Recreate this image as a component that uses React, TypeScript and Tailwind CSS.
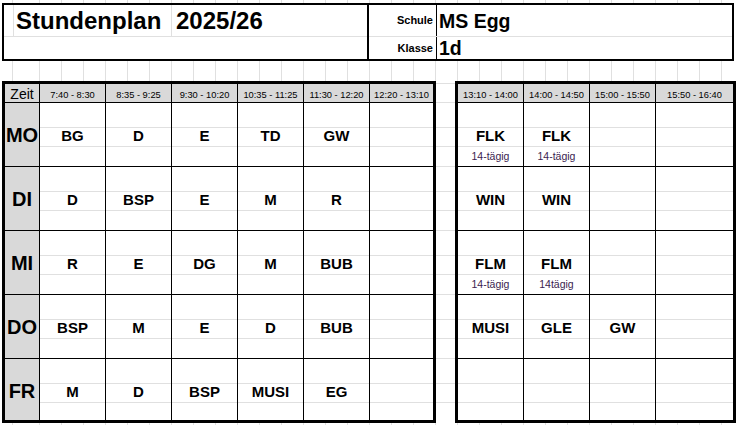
import clsx from "clsx";

type Slot = { s?: string; n?: string };

const AM_TIMES = ["7:40 - 8:30", "8:35 - 9:25", "9:30 - 10:20", "10:35 - 11:25", "11:30 - 12:20", "12:20 - 13:10"];
const PM_TIMES = ["13:10 - 14:00", "14:00 - 14:50", "15:00 - 15:50", "15:50 - 16:40"];

const WEEK: { day: string; am: string[]; pm: Slot[] }[] = [
  {
    day: "MO",
    am: ["BG", "D", "E", "TD", "GW", ""],
    pm: [{ s: "FLK", n: "14-tägig" }, { s: "FLK", n: "14-tägig" }, {}, {}],
  },
  {
    day: "DI",
    am: ["D", "BSP", "E", "M", "R", ""],
    pm: [{ s: "WIN" }, { s: "WIN" }, {}, {}],
  },
  {
    day: "MI",
    am: ["R", "E", "DG", "M", "BUB", ""],
    pm: [{ s: "FLM", n: "14-tägig" }, { s: "FLM", n: "14tägig" }, {}, {}],
  },
  {
    day: "DO",
    am: ["BSP", "M", "E", "D", "BUB", ""],
    pm: [{ s: "MUSI" }, { s: "GLE" }, { s: "GW" }, {}],
  },
  {
    day: "FR",
    am: ["M", "D", "BSP", "MUSI", "EG", ""],
    pm: [{}, {}, {}, {}],
  },
];

function HeadCell({ label, first }: { label: string; first: boolean }) {
  return (
    <div
      className={clsx(
        "flex h-[19px] items-end justify-center border-b border-black bg-[#d9d9d9] pb-[1px] text-[9.3px] leading-[11px]",
        !first && "border-l",
      )}
    >
      {label}
    </div>
  );
}

function SlotCell({ slot, first, last }: { slot: Slot; first: boolean; last: boolean }) {
  return (
    <div className={clsx("flex flex-col border-black bg-white", !first && "border-l", !last && "border-b")}>
      <div className="h-[24px]" />
      <div className="flex h-[19px] items-center justify-center border-t border-[#e0e0e0] pb-[3px] text-[15px] font-bold leading-[15px]">
        {slot.s}
      </div>
      <div
        className={clsx(
          "flex items-center justify-center border-t border-[#e0e0e0] pb-[2px] text-[10.5px] leading-[12px] text-[#3b1d4f]",
          last ? "h-[18px]" : "h-[20px]",
        )}
      >
        {slot.n}
      </div>
    </div>
  );
}

function DayCell({ day, last }: { day: string; last: boolean }) {
  return (
    <div className={clsx("flex flex-col border-black bg-[#d9d9d9]", !last && "border-b")}>
      <div className="h-[24px]" />
      <div className="flex h-[19px] items-center justify-center pb-[4px] text-[20px] font-bold leading-[12px]">{day}</div>
      <div className={last ? "h-[18px]" : "h-[20px]"} />
    </div>
  );
}

function Morning() {
  return (
    <div className="grid grid-cols-[34px_repeat(5,66px)_64px] border-[3px] border-black">
      <div className="flex h-[19px] items-end justify-center border-b border-black bg-[#d9d9d9] text-[14px] leading-[15px]">
        Zeit
      </div>
      {AM_TIMES.map((t) => (
        <HeadCell key={t} label={t} first={false} />
      ))}
      {WEEK.map((row, r) => {
        const last = r === WEEK.length - 1;
        return [
          <DayCell key={row.day} day={row.day} last={last} />,
          ...row.am.map((s, c) => <SlotCell key={`${row.day}-${c}`} slot={{ s }} first={false} last={last} />),
        ];
      })}
    </div>
  );
}

function Afternoon() {
  return (
    <div className="grid grid-cols-[65px_66px_66px_78px] border-[3px] border-black">
      {PM_TIMES.map((t, c) => (
        <HeadCell key={t} label={t} first={c === 0} />
      ))}
      {WEEK.map((row, r) =>
        row.pm.map((slot, c) => (
          <SlotCell key={`${row.day}-pm-${c}`} slot={slot} first={c === 0} last={r === WEEK.length - 1} />
        )),
      )}
    </div>
  );
}

// empty spreadsheet column between the two blocks, only gridlines
function Gap() {
  return (
    <div className="flex w-[19px] flex-col">
      <div className="h-[2px]" />
      <div className="h-[19px] border-t border-[#e0e0e0]" />
      {WEEK.map((d) => (
        <div key={d.day} className="border-t border-[#e0e0e0]">
          <div className="h-[24px]" />
          <div className="h-[19px] border-t border-[#e0e0e0]" />
          <div className="h-[20px] border-t border-[#e0e0e0]" />
        </div>
      ))}
    </div>
  );
}

function TitleBox() {
  return (
    <div className="flex h-[58px] w-[732px] border-2 border-black bg-white">
      <div className="flex w-[365px] flex-col border-r-2 border-black">
        <div className="flex h-[31px]">
          <div className="w-[10px] border-r border-[#e0e0e0]" />
          <div className="flex w-[158px] items-center border-r border-[#e0e0e0] pl-[2px] text-[24px] font-bold leading-[27px]">
            Stundenplan
          </div>
          <div className="flex flex-1 items-center pl-[4px] text-[24px] font-bold leading-[27px]">2025/26</div>
        </div>
        <div className="h-[23px] border-t border-[#e0e0e0]" />
      </div>
      <div className="flex flex-1 flex-col">
        <div className="flex h-[31px]">
          <div className="flex w-[68px] items-center justify-end border-r border-black pr-[3px] text-[11px] font-bold">
            Schule
          </div>
          <div className="flex flex-1 items-center pl-[2px] text-[19.5px] font-bold leading-[22px]">MS Egg</div>
        </div>
        <div className="flex h-[23px] border-t border-[#e0e0e0]">
          <div className="flex w-[68px] items-center justify-end border-r border-black pr-[3px] text-[11px] font-bold">
            Klasse
          </div>
          <div className="flex flex-1 items-center pl-[2px] text-[19.5px] font-bold leading-[22px]">1d</div>
        </div>
      </div>
    </div>
  );
}

export default function App() {
  return (
    <div className="h-[425px] w-[738px] overflow-hidden bg-white font-['Liberation_Sans',Arial,sans-serif] text-black [background-image:repeating-linear-gradient(to_right,#e0e0e0_0_1px,transparent_1px_22px),linear-gradient(to_right,transparent_12px,#e0e0e0_12px,#e0e0e0_13px,transparent_13px)] [background-position:39px_0,0_0] [background-repeat:no-repeat] [background-size:100%_100%,100%_100%]">
      <div className="pl-[2px] pt-[3px]">
        <TitleBox />
        <div className="mt-[20px] flex items-start">
          <Morning />
          <Gap />
          <Afternoon />
        </div>
      </div>
    </div>
  );
}
